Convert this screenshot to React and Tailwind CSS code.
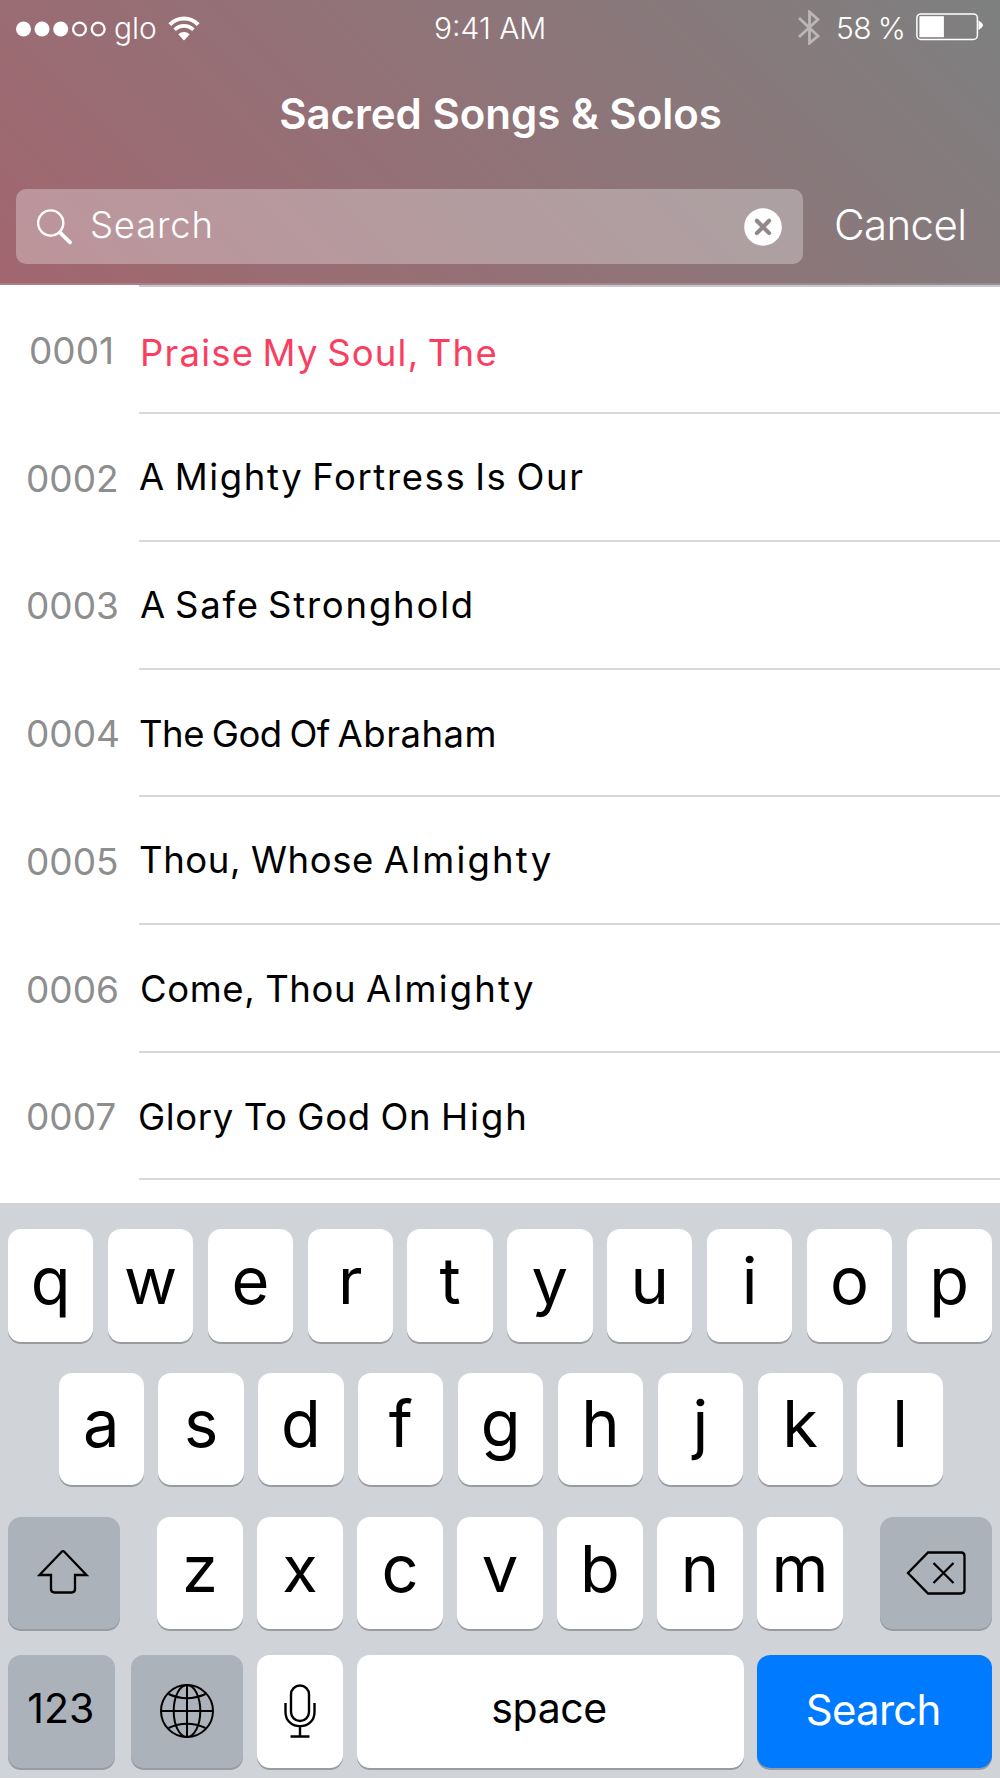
import React from 'react';

const songs = [
    { no: '0001', title: 'Praise My Soul, The', noClass: 'pl-[29px]', titleClass: 'pl-[1px] pt-[4px] text-[#fa3e5f] tracking-[1.2px] [word-spacing:-3px]' },
    { no: '0002', title: 'A Mighty Fortress Is Our', noClass: 'pl-[26px]', titleClass: 'pt-px tracking-[1.6px] [word-spacing:-2.9px]' },
    { no: '0003', title: 'A Safe Stronghold', noClass: 'pl-[26px]', titleClass: 'pl-[1px] pt-px tracking-[1.8px] [word-spacing:-4px]' },
    {
        no: '0004',
        title: <>The God Of <span className="tracking-[0.5px]">Abraham</span></>,
        noClass: 'pl-[26px]',
        titleClass: 'pt-[2px] tracking-[-0.5px] [word-spacing:-2px]',
    },
    {
        no: '0005',
        title: <>Thou, Whose <span className="tracking-[2.2px]">Almighty</span></>,
        noClass: 'pl-[26px]',
        titleClass: 'pt-px tracking-[0.6px] [word-spacing:-1px]',
    },
    {
        no: '0006',
        title: <>Come, Thou <span className="tracking-[2.2px]">Almighty</span></>,
        noClass: 'pl-[26px]',
        titleClass: 'pl-[1px] pt-[2px] tracking-[0.6px] [word-spacing:-1px]',
    },
    {
        no: '0007',
        title: <>Glory To God On <span className="tracking-[2px]">High</span></>,
        noClass: 'pl-[26px]',
        titleClass: 'pt-[2px] -ml-px tracking-[0.6px] [word-spacing:-1px]',
    },
];

const StatusBar = () => (
    <div className="flex h-[56px] items-center pl-4 pr-[17px] text-[30px] font-light">
        <div className="flex w-[418px] items-center">
            <svg width="92" height="16" viewBox="0 0 92 16" fill="none" className="mt-[2px]">
                <circle cx="7.5" cy="8" r="7.5" fill="#fff" />
                <circle cx="26" cy="8" r="7.5" fill="#fff" />
                <circle cx="44.7" cy="8" r="7.5" fill="#fff" />
                <circle cx="63.5" cy="8" r="6.4" stroke="#fff" strokeWidth="2.3" />
                <circle cx="82.2" cy="8" r="6.4" stroke="#fff" strokeWidth="2.3" />
            </svg>
            <span className="ml-[6px] w-[44px]">glo</span>
            <svg width="32" height="25" viewBox="0 0 32 25" fill="none" className="ml-[10px]">
                <path d="M1.8 8.6C9.8 0.6 22.2 0.6 30.2 8.6" stroke="#fff" strokeWidth="4" />
                <path d="M6.6 13.7C12 8.6 20 8.6 25.4 13.7" stroke="#fff" strokeWidth="3.6" />
                <path d="M10.4 18.4C13.6 15.2 18.4 15.2 21.6 18.4L16 24.4Z" fill="#fff" />
            </svg>
        </div>
        <span className="whitespace-nowrap">9:41 AM</span>
        <div className="ml-auto flex items-center">
            <svg width="22" height="35" viewBox="0 0 22 35" fill="none" className="mb-[2px] opacity-45">
                <path d="M1 8L20 26L11.5 33V2L20 9.5L1 27" stroke="#fff" strokeWidth="2.8" />
            </svg>
            <span className="ml-[16px] w-[68px] whitespace-nowrap tracking-[-0.6px] [word-spacing:-1px]">58 %</span>
            <svg width="67" height="28" viewBox="0 0 67 28" fill="none" className="ml-[12px] mb-[2px]">
                <rect x="0.9" y="0.9" width="60.5" height="25.6" rx="4" stroke="#fff" strokeWidth="1.5" />
                <rect x="3.4" y="3.2" width="24.5" height="21" fill="#fff" />
                <path d="M62.5 7.5C64 8 67 11 67 12.3S64 16.5 62.5 17Z" fill="#fff" />
            </svg>
        </div>
    </div>
);

const SearchBar = () => (
    <div className="mt-[20px] flex h-[75px] items-center pl-4">
        <div className="flex h-full w-[787px] items-center rounded-[10px] bg-white/30 pl-[21px] pr-[21px]">
            <svg width="36" height="36" viewBox="0 0 36 36" fill="none" stroke="#fff">
                <circle cx="13.7" cy="14" r="12.6" strokeWidth="2.4" />
                <path d="M23 23.5L33 33.3" strokeWidth="3.8" strokeLinecap="round" />
            </svg>
            <span className="ml-[17px] pb-[2px] text-[36.5px] font-light tracking-[0.8px]">Search</span>
            <svg width="38" height="38" viewBox="0 0 38 38" fill="none" className="ml-auto">
                <circle cx="19" cy="19" r="18.8" fill="#fff" />
                <path d="M12.9 12.7L25.1 25.1M25.1 12.7L12.9 25.1" stroke="#93888b" strokeWidth="4.2" strokeLinecap="round" />
            </svg>
        </div>
        <span className="ml-[31px] pb-[4px] text-[42px] font-light tracking-[-0.6px]">Cancel</span>
    </div>
);

const SongRow = ({ song }) => (
    <li className="flex h-[127.7px]">
        <span className={`flex w-[139px] shrink-0 items-center pt-px text-[37px] text-[#8e8e8e] ${song.noClass}`}>
            {song.no}
        </span>
        <div className="flex-1 border-b-2 border-[#d9d9dc]">
            <div className={`whitespace-nowrap text-[36.5px] leading-[125px] ${song.titleClass}`}>
                {song.title}
            </div>
        </div>
    </li>
);

const Key = ({ children, className = 'w-[85.33px] bg-white text-[65px]' }) => (
    <button className={`flex h-[112.5px] shrink-0 items-center justify-center rounded-[13px] shadow-[0_2px_0_#989ca1] ${className}`}>
        {children}
    </button>
);

const Letter = ({ char, className = 'pb-[10px]' }) => (
    <Key>
        <span className={className}>{char}</span>
    </Key>
);

const Keyboard = () => (
    <div className="flex-1 bg-[#d0d4d9] px-2 pt-[26px] text-black">
        <div className="flex justify-between">
            {'qwertyuiop'.split('').map((c) => <Letter key={c} char={c} />)}
        </div>
        <div className="mt-[31.2px] flex justify-between pl-[50.6px] pr-[49.3px]">
            {'asdfghjkl'.split('').map((c) => <Letter key={c} char={c} />)}
        </div>
        <div className="mt-[31.5px] flex justify-between">
            <Key className="w-[112px] bg-[#abb2ba]">
                <svg width="52" height="46" viewBox="0 0 52 46" fill="none" stroke="#000" strokeWidth="2.3" className="mr-[2px] mb-[2px]">
                    <path d="M24.7 2.8Q26 1.5 27.3 2.8L49.5 26H38V40Q38 43.5 34.5 43.5H17.5Q14 43.5 14 40V26H2.5Z" />
                </svg>
            </Key>
            <div className="flex gap-[14.67px]">
                {'zxcvbnm'.split('').map((c) => <Letter key={c} char={c} className="pb-[8px]" />)}
            </div>
            <Key className="w-[112px] bg-[#abb2ba]">
                <svg width="60" height="44" viewBox="0 0 60 44" fill="none" stroke="#000" strokeWidth="2.3">
                    <path d="M22 1.5H55Q58.5 1.5 58.5 5V39Q58.5 42.5 55 42.5H22L2 22Z" />
                    <path d="M27.5 12L47.5 32M47.5 12L27.5 32" />
                </svg>
            </Key>
        </div>
        <div className="mt-[26px] flex">
            <Key className="w-[106.7px] bg-[#abb2ba] text-[41px]">
                <span className="pb-[6px] pr-[1px]">123</span>
            </Key>
            <Key className="ml-[16.3px] w-[111.7px] bg-[#abb2ba]">
                <svg width="54" height="54" viewBox="0 0 54 54" fill="none" stroke="#000" strokeWidth="2">
                    <circle cx="27" cy="27" r="26" />
                    <ellipse cx="27" cy="27" rx="13.3" ry="26" />
                    <path d="M27 1V53M1 27H53" />
                    <path d="M8.5 10Q27 18.5 45.5 10M8.5 44Q27 35.5 45.5 44" />
                </svg>
            </Key>
            <Key className="ml-[14.6px] w-[85.33px] bg-white">
                <svg width="32" height="54" viewBox="0 0 32 54" fill="none" stroke="#000" strokeWidth="2.4">
                    <rect x="7" y="1.5" width="18" height="35.5" rx="9" />
                    <path d="M1.5 19V28C1.5 47 30.5 47 30.5 28V19M16 42.5V52.5M6.5 52.5H25.5" />
                </svg>
            </Key>
            <Key className="ml-[14.67px] w-[386.7px] bg-white text-[41px]">
                <span className="pb-[6px] pr-[3px] tracking-[-0.4px]">space</span>
            </Key>
            <Key className="ml-auto w-[234.7px] bg-[#007aff] text-[42px] text-white">
                <span className="pb-[4px] pr-[3px] tracking-[-0.8px]">Search</span>
            </Key>
        </div>
    </div>
);

export default function App() {
    return (
        <div className="flex h-[1778px] w-[1000px] flex-col overflow-hidden bg-white font-['Inter',sans-serif]">
            <header className="h-[285px] shrink-0 border-b-2 border-white/15 bg-[linear-gradient(45deg,#a2666f,#7e8080)] bg-origin-border text-white">
                <StatusBar />
                <h1 className="flex h-[113px] items-center justify-center pt-px pl-[1px] text-[42px] font-semibold">Sacred Songs &amp; Solos</h1>
                <SearchBar />
            </header>
            <ul className="h-[918px] shrink-0 overflow-hidden text-black">
                <li className="ml-[139px] h-[1.5px] bg-[#c8c8d0]" />
                {songs.map((song) => <SongRow key={song.no} song={song} />)}
            </ul>
            <Keyboard />
        </div>
    );
}
